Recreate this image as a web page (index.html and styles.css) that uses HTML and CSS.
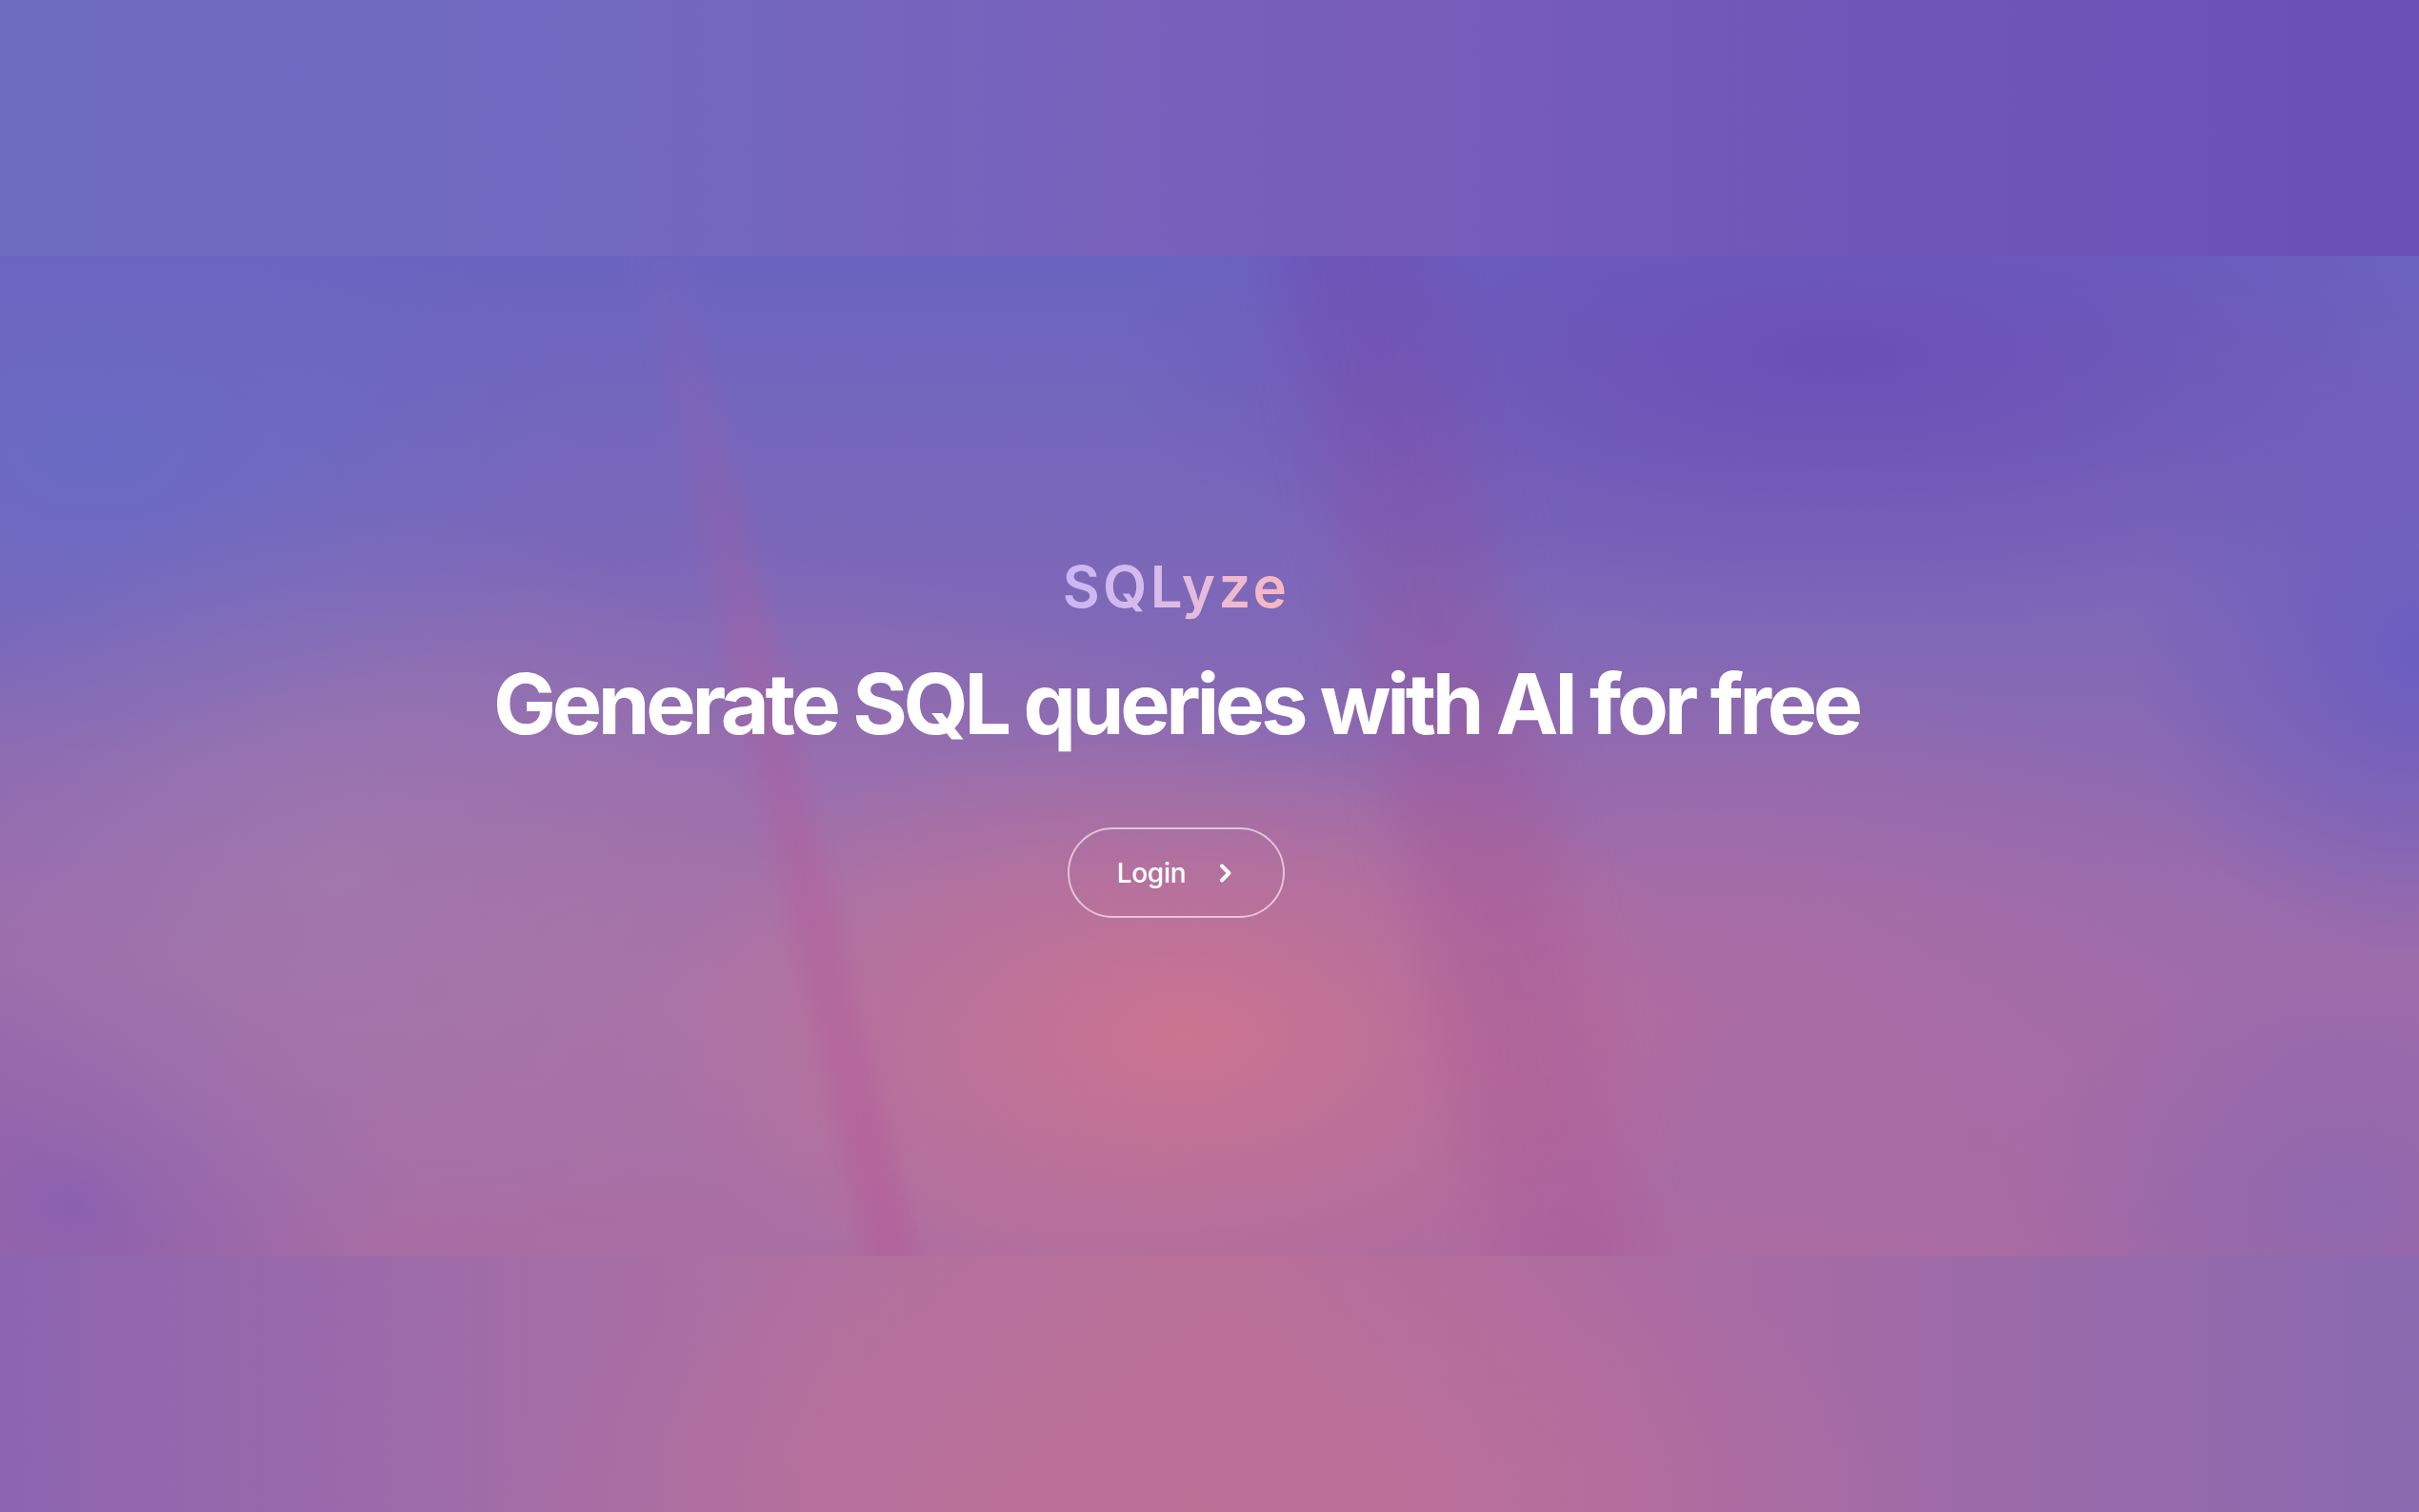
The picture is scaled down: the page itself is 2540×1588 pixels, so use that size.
FILE: index.html
```html
<!DOCTYPE html>
<html lang="en">
<head>
    <meta charset="UTF-8">
    <title>SQLyze - Generate SQL queries with AI for free</title>
    <link rel="stylesheet" href="styles.css">
</head>
<body>
    <div class="page">
        <section class="hero">
            <div class="streak streak-left"></div>
            <div class="streak streak-right"></div>
            <div class="hero-content">
                <h1 class="brand">SQLyze</h1>
                <h2 class="headline">Generate SQL queries with AI for free</h2>
                <a class="login-btn" href="#">
                    <span>Login</span>
                    <svg width="24" height="24" viewBox="0 0 24 24" fill="none" stroke="currentColor" stroke-width="4" stroke-linecap="round" stroke-linejoin="round">
                        <path d="M8 4.5l7.5 7.5-7.5 7.5"/>
                    </svg>
                </a>
            </div>
        </section>
    </div>
</body>
</html>
```

FILE: styles.css
```css
* {
    box-sizing: border-box;
}
body {
    margin: 0;
    font-family: Inter, "Noto Sans", sans-serif;
    color: #ffffff;
}
.page {
    height: 100vh;
    display: flex;
    align-items: center;
    overflow: hidden;
    background:
        radial-gradient(ellipse 30% 20% at 50% 100%, rgba(190, 112, 150, 0.8), transparent),
        radial-gradient(ellipse 12% 10% at 50% 45%, rgba(126, 98, 184, 0.6), transparent),
        linear-gradient(90deg, #6d6cc1 0%, #7168c0 25%, #7762bc 45%, #785cba 58%, #6e56b8 78%, #6a50b5 100%) top / 100% 50% no-repeat,
        linear-gradient(90deg, #8c64b0 0%, #a06ca8 20%, #b070a0 34%, #b87098 50%, #b06ca0 64%, #9c6aa8 82%, #8a6ab0 100%) bottom / 100% 50% no-repeat;
}
.hero {
    position: relative;
    width: 100%;
    height: 1050px;
    display: flex;
    align-items: center;
    justify-content: center;
    padding-right: 70px;
    overflow: hidden;
    background:
        radial-gradient(ellipse 22% 32% at 49% 78%, rgba(206, 116, 142, 0.95), transparent),
        radial-gradient(ellipse 30% 45% at 30% 75%, rgba(172, 118, 166, 0.75), transparent),
        radial-gradient(ellipse 25% 35% at 70% 75%, rgba(176, 108, 160, 0.7), transparent),
        radial-gradient(ellipse 18% 40% at 14% 62%, rgba(158, 126, 176, 0.6), transparent),
        radial-gradient(ellipse 20% 30% at 4% 20%, rgba(104, 106, 196, 0.9), transparent),
        radial-gradient(ellipse 30% 28% at 76% 10%, rgba(106, 76, 180, 0.85), transparent),
        radial-gradient(ellipse 12% 30% at 100% 40%, rgba(104, 92, 192, 0.9), transparent),
        radial-gradient(ellipse 14% 25% at 3% 95%, rgba(136, 96, 176, 0.9), transparent),
        radial-gradient(ellipse 14% 25% at 97% 95%, rgba(140, 104, 176, 0.9), transparent),
        linear-gradient(180deg, #6a64c0 0%, #7e68b8 35%, #9a6cac 65%, #a86aa2 100%);
}
.streak {
    position: absolute;
    top: -60px;
    height: 1200px;
    transform-origin: top center;
    filter: blur(12px);
}
.streak-left {
    left: 655px;
    width: 50px;
    transform: rotate(-13deg);
    background: linear-gradient(180deg, rgba(150, 80, 160, 0) 0%, rgba(176, 90, 156, 0.3) 40%, rgba(180, 86, 150, 0.5) 100%);
}
.streak-right {
    left: 1330px;
    width: 160px;
    transform: rotate(-12deg);
    filter: blur(30px);
    background: linear-gradient(180deg, rgba(106, 70, 178, 0.4) 0%, rgba(160, 84, 150, 0.4) 50%, rgba(176, 90, 150, 0.45) 100%);
}
.hero-content {
    position: relative;
    display: flex;
    flex-direction: column;
    align-items: center;
    margin-top: -44px;
}
.brand {
    margin: 0;
    font-size: 60px;
    font-weight: 600;
    line-height: 72px;
    letter-spacing: 0.055em;
    background: linear-gradient(90deg, #c9b6f4 0%, #d8bcea 40%, #ecbad4 70%, #f8b6c2 100%);
    -webkit-background-clip: text;
    background-clip: text;
    color: transparent;
}
.headline {
    margin: 37px 0 0 0;
    font-size: 88px;
    font-weight: 700;
    line-height: 100px;
    letter-spacing: -0.049em;
    color: #ffffff;
}
.login-btn {
    margin-top: 80px;
    display: flex;
    align-items: center;
    gap: 30px;
    height: 95px;
    padding: 0 48px 0 50px;
    border: 2px solid rgba(255, 255, 255, 0.6);
    border-radius: 999px;
    color: #ffffff;
    text-decoration: none;
    font-size: 28px;
    font-weight: 500;
    letter-spacing: -0.01em;
}
.login-btn svg {
    width: 24px;
    height: 24px;
}
```
